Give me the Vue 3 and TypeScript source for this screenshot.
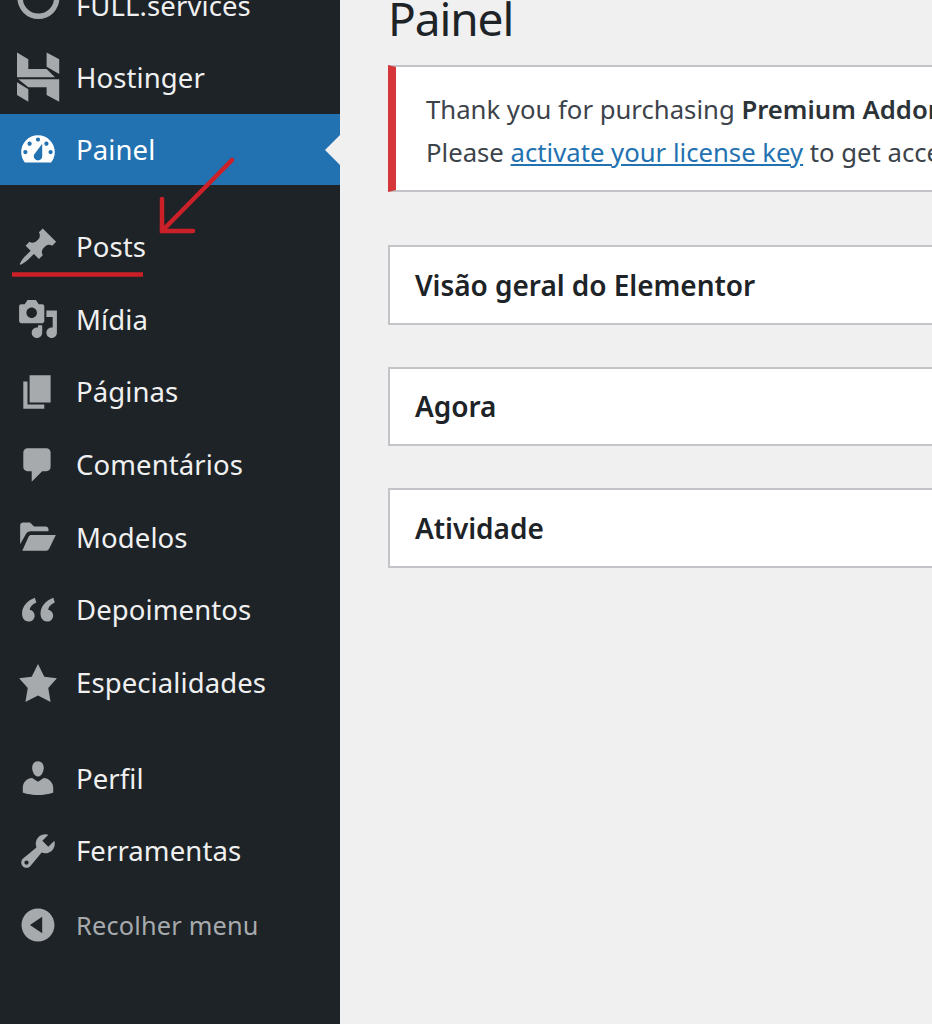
<script setup lang="ts">
interface MenuItem {
  label: string
  path: string
  active?: boolean
  gapBefore?: boolean
}

// * Icon paths, all in a 20x20 box
const menu: MenuItem[] = [
  {
    label: 'FULL.services',
    path: 'M.2 6.700a10 10 0 0 0 20 0h-2.600a7.400 7.400 0 0 1-14.800 0z',
  },
  {
    label: 'Hostinger',
    path: 'M0-2.200L5.400 1.100V5.700H14.100L18.100 9.700H0zM14.100-2.200L20.100 1.100V8.100L14.100 4.600zM.6 10.600H20.100V21.300L14.100 18.100V14.400H5.400zM0 12L5.400 15.400V21.300L0 18.100z',
  },
  {
    label: 'Painel',
    active: true,
    path: 'M3.760 16h12.480c1.100-1.370 1.760-3.110 1.760-5 0-4.420-3.580-8-8-8s-8 3.580-8 8c0 1.890.660 3.630 1.760 5zM10 4c.550 0 1 .450 1 1s-.450 1-1 1-1-.450-1-1 .450-1 1-1zM6 6c.550 0 1 .450 1 1s-.450 1-1 1-1-.450-1-1 .450-1 1-1zm8 0c.550 0 1 .450 1 1s-.450 1-1 1-1-.450-1-1 .450-1 1-1zm-5.370 5.550L12 7v6c0 1.100-.900 2-2 2s-2-.900-2-2c0-.570.240-1.080.630-1.450zM4 10c.550 0 1 .450 1 1s-.450 1-1 1-1-.450-1-1 .450-1 1-1zm12 0c.550 0 1 .450 1 1s-.450 1-1 1-1-.450-1-1 .450-1 1-1z',
  },
  {
    label: 'Posts',
    gapBefore: true,
    path: 'M10.440 3.020l1.820-1.820 6.360 6.350-1.830 1.820c-1.050-.680-2.480-.570-3.410.360l-.750.750c-.920.930-1.040 2.350-.350 3.410l-1.830 1.820-2.410-2.410-2.800 2.790c-.420.420-3.380 2.710-3.800 2.290s1.860-3.390 2.280-3.810l2.790-2.790L4.100 9.360l1.830-1.820c1.050.690 2.480.570 3.400-.360l.750-.750c.930-.920 1.050-2.350.360-3.410z',
  },
  {
    label: 'Mídia',
    path: 'M13 11V4c0-.550-.450-1-1-1h-1.670L9 1H5L3.670 3H2c-.550 0-1 .450-1 1v7c0 .550.450 1 1 1h10c.550 0 1-.450 1-1zM7 4.500c1.380 0 2.500 1.120 2.500 2.500S8.380 9.500 7 9.500 4.500 8.380 4.500 7 5.620 4.500 7 4.500zM14 6h5v10.500c0 1.380-1.120 2.500-2.500 2.500S14 17.880 14 16.500s1.120-2.500 2.500-2.500c.170 0 .340.020.500.050V9h-3V6zm-4 8.050V13h2v3.500c0 1.380-1.120 2.500-2.500 2.500S7 17.880 7 16.500 8.120 14 9.500 14c.170 0 .340.020.500.050z',
  },
  { label: 'Páginas', path: 'M6 15V2h10v13H6zm-1 1h8v2H3V5h2v11z' },
  {
    label: 'Comentários',
    path: 'M5 2h9c1.100 0 2 .900 2 2v7c0 1.100-.900 2-2 2h-2l-5 5v-5H5c-1.100 0-2-.900-2-2V4c0-1.100.900-2 2-2z',
  },
  {
    label: 'Modelos',
    path: 'M1.500 13.500V4.500c0-.800.600-1.400 1.400-1.400h3.300l1.900 1.900h5.500c.800 0 1.400.600 1.400 1.400v.900H6.500c-1 0-1.800.500-2.300 1.400zM2.500 16.500l3-6.600c.300-.600.700-.900 1.400-.900h11.600l-3.200 6.600c-.300.600-.800.900-1.400.900z',
  },
  {
    label: 'Depoimentos',
    path: 'M8.500 4.200C5 5.500 2.400 8.200 2.400 11.800c0 2.100 1.300 3.700 3.100 3.700 1.600 0 2.900-1.200 2.900-2.800 0-1.500-1-2.600-2.400-2.800.2-1.300 1.200-2.600 3.200-3.500zM17.300 4.200c-3.500 1.300-6.100 4-6.100 7.600 0 2.100 1.300 3.700 3.100 3.700 1.600 0 2.900-1.200 2.900-2.800 0-1.500-1-2.600-2.400-2.800.2-1.300 1.200-2.600 3.200-3.500z',
  },
  {
    label: 'Especialidades',
    path: 'M10 1l3 6 6 .750-4.120 4.620L16 19l-6-3-6 3 1.130-6.630L1 7.750 7 7z',
  },
  {
    label: 'Perfil',
    gapBefore: true,
    path: 'M10 9.250c-2.270 0-2.730-3.440-2.730-3.440C7 4.020 7.820 2 9.970 2c2.160 0 2.980 2.020 2.710 3.810 0 0-.410 3.440-2.680 3.440zm0 2.570L12.720 10c2.390 0 4.520 2.330 4.520 4.530v2.490s-3.650 1.130-7.240 1.130c-3.650 0-7.240-1.130-7.240-1.130v-2.490c0-2.250 1.940-4.480 4.470-4.480z',
  },
  {
    label: 'Ferramentas',
    path: 'M16.680 9.770c-1.340 1.340-3.300 1.670-4.950.990l-5.410 6.520c-.990.990-2.590.990-3.580 0s-.990-2.590 0-3.570l6.520-5.420c-.680-1.650-.350-3.610.990-4.950 1.280-1.280 3.120-1.620 4.720-1.060l-2.890 2.890 2.820 2.820 2.860-2.870c.530 1.580.180 3.390-1.080 4.650zM3.810 16.210c.400.390 1.040.390 1.430 0 .400-.400.400-1.040 0-1.430-.390-.400-1.030-.400-1.430 0-.390.390-.390 1.030 0 1.430z',
  },
]

const collapsePath =
  'M10 2.160c4.330 0 7.840 3.510 7.840 7.840s-3.510 7.840-7.840 7.840S2.160 14.330 2.160 10 5.710 2.160 10 2.160zm2 11.720V6.120L6.180 9.970z'

const panels = ['Visão geral do Elementor', 'Agora', 'Atividade']
</script>

<template>
  <div class="page">
    <aside class="sidebar">
      <ul class="menu">
        <li
          v-for="item in menu"
          :key="item.label"
          class="menu-item"
          :class="{ active: item.active, 'gap-before': item.gapBefore }"
        >
          <svg class="icon" viewBox="0 0 20 20"><path :d="item.path" /></svg>
          <span>{{ item.label }}</span>
        </li>
        <li class="menu-item collapse">
          <svg class="icon" viewBox="0 0 20 20"><path :d="collapsePath" /></svg>
          <span>Recolher menu</span>
        </li>
      </ul>
    </aside>

    <main class="content">
      <h1>Painel</h1>

      <div class="notice">
        <p>Thank you for purchasing <strong>Premium Addons Pro</strong></p>
        <p>Please <a href="#">activate your license key</a> to get access to all features</p>
      </div>

      <section v-for="title in panels" :key="title" class="panel">
        <h2>{{ title }}</h2>
      </section>
    </main>

    <!-- * Red annotation drawn over the screenshot -->
    <svg class="annotation" width="340" height="290" viewBox="0 0 340 290">
      <g fill="none" stroke="#cc2029" stroke-width="4.500" stroke-linecap="round">
        <path d="M232 160 L162 231" />
        <path d="M162 199 L162 231 L193 231" />
        <path d="M12 274.500 L143 274.500" stroke-linecap="butt" />
      </g>
    </svg>
  </div>
</template>

<style scoped>
.page {
  position: relative;
  display: flex;
  width: 932px;
  height: 1024px;
  overflow: hidden;
  background: #f0f0f1;
  font-family: 'Noto Sans', 'Open Sans', sans-serif;
}

.sidebar {
  flex: 0 0 340px;
  background: #1d2327;
}

.menu {
  list-style: none;
  margin: -31px 0 0;
  padding: 0;
}

.menu-item {
  display: flex;
  align-items: center;
  gap: 17px;
  height: 72.670px;
  padding-left: 17px;
  color: #f0f0f1;
  font-size: 27.500px;
  letter-spacing: 0.1px;
}

.menu-item.gap-before {
  margin-top: 25px;
}

.menu-item.gap-before ~ .gap-before {
  margin-top: 23px;
}

.icon {
  flex: 0 0 42px;
  width: 42px;
  height: 42px;
  fill: #a7aaad;
  overflow: visible;
}

.menu-item.active {
  position: relative;
  height: 71px;
  background: #2271b1;
  color: #fff;
}

.menu-item.active .icon {
  fill: #fff;
}

.menu-item.active::after {
  content: '';
  position: absolute;
  right: 0;
  top: 21px;
  border: 15px solid transparent;
  border-right-color: #f0f0f1;
  border-left-width: 0;
}

.menu-item.collapse {
  margin-top: 1px;
  color: #a7aaad;
  font-size: 25.300px;
  letter-spacing: 0.2px;
}

.content {
  flex: 0 0 auto;
  width: 700px;
  padding-left: 48px;
  box-sizing: border-box;
}

h1 {
  margin: -15px 0 0;
  height: 80px;
  color: #1d2327;
  font-size: 46px;
  font-weight: 400;
  line-height: 66px;
  letter-spacing: -1.1px;
}

.notice {
  width: 652px;
  height: 127px;
  box-sizing: border-box;
  padding: 22px 0 0 30px;
  background: #fff;
  border: 2px solid #c3c4c7;
  border-left: 8px solid #d63638;
  color: #3c434a;
  font-size: 25.700px;
  white-space: nowrap;
  overflow: hidden;
}

.notice p {
  margin: 0;
  height: 42.500px;
  line-height: 42.500px;
}

.notice a {
  color: #2271b1;
}

.notice strong {
  font-weight: 600;
  color: #2c3338;
}

.panel {
  display: flex;
  align-items: center;
  width: 652px;
  height: 79.500px;
  margin-top: 42px;
  box-sizing: border-box;
  padding-left: 25px;
  background: #fff;
  border: 2px solid #c3c4c7;
}

.notice + .panel {
  margin-top: 53px;
}

h2 {
  margin: 0;
  color: #1d2327;
  font-size: 28px;
  font-weight: 600;
  letter-spacing: -0.05px;
}

.annotation {
  position: absolute;
  left: 0;
  top: 0;
  pointer-events: none;
}
</style>
